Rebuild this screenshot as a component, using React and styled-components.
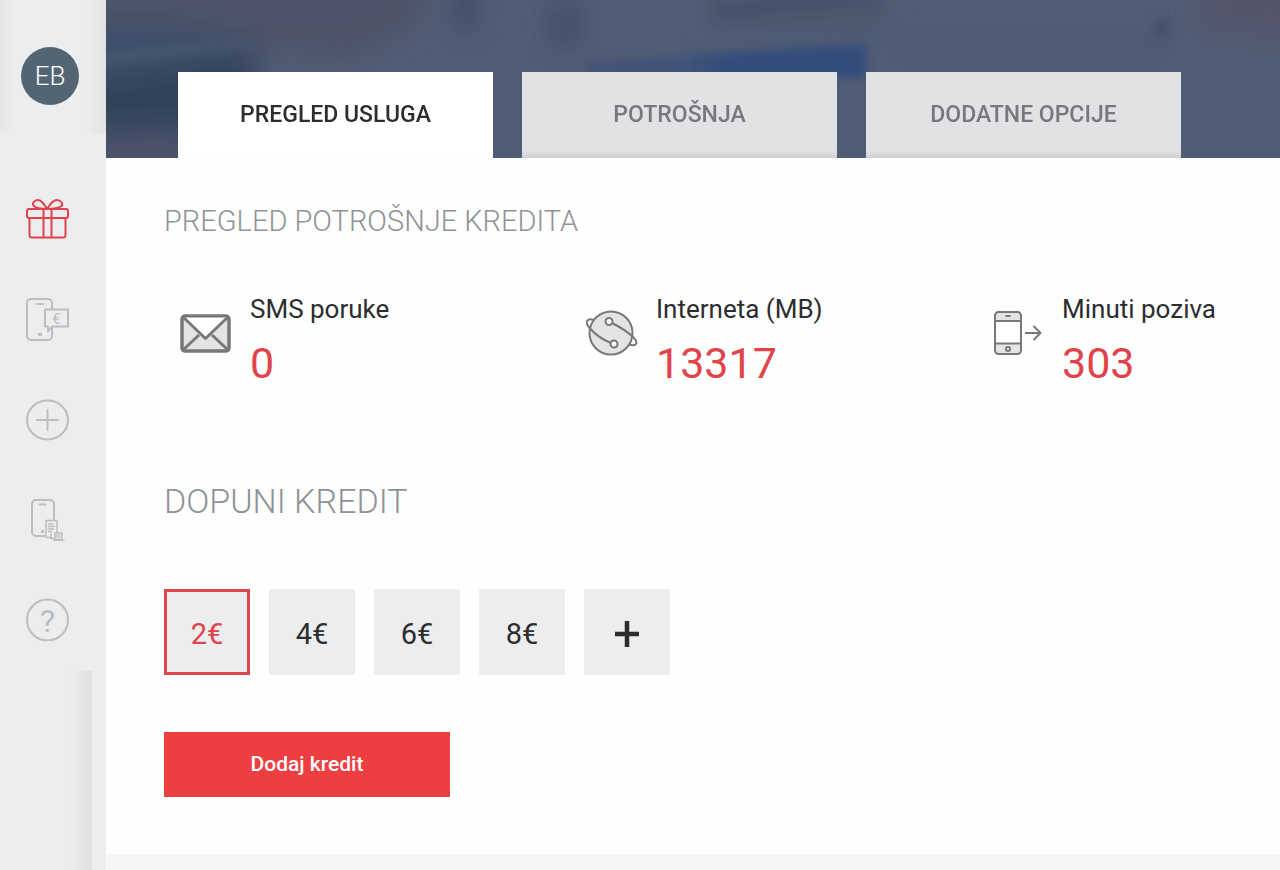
import React, { useState } from "react";
import styled, { createGlobalStyle } from "styled-components";

const tabs = ["PREGLED USLUGA", "POTROŠNJA", "DODATNE OPCIJE"];
const amounts = [2, 4, 6, 8];

const GiftIcon = () => (
    <SideSvg viewBox="0 0 44 44" aria-hidden="true">
        <rect x="2" y="12" width="41" height="9" rx="2" />
        <path d="M4.5 21v17.5a2 2 0 0 0 2 2h32a2 2 0 0 0 2-2V21M18.5 12v28.5M26.5 12v28.5" />
        <path d="M22 12C19 7 16.500 3 13 3 9 3 6.500 7 9 9c2 2 7 3 13 3zM22 12c3-5 6.500-9 10-9 4 0 6.500 4 4.500 6-2.500 2-8.500 3-14.500 3z" />
    </SideSvg>
);

const PhoneEuroIcon = () => (
    <SideSvg viewBox="0 0 44 44" aria-hidden="true">
        <path d="M27 12V6a4 4 0 0 0-4-4H6a4 4 0 0 0-4 4v33a4 4 0 0 0 4 4h17a4 4 0 0 0 4-4v-8" />
        <path d="M12 7h6" />
        <circle cx="15" cy="37.500" r="1" />
        <path d="M20 12.500h23v17H27l-4 5v-5h-3z" />
        <text x="31.500" y="26.500" fontSize="15">€</text>
    </SideSvg>
);

const AddIcon = () => (
    <SideSvg viewBox="0 0 44 44" aria-hidden="true">
        <ellipse cx="22.500" cy="23" rx="20.500" ry="19.500" />
        <path d="M22.500 13v20M12 23h21" />
    </SideSvg>
);

const PhoneBillIcon = () => (
    <SideSvg viewBox="0 0 44 44" aria-hidden="true">
        <path d="M29 22V7a4 4 0 0 0-4-4H11a4 4 0 0 0-4 4v28a4 4 0 0 0 4 4h9" />
        <path d="M14.500 7.500h6" />
        <circle cx="17.500" cy="34.500" r=".8" />
        <g strokeWidth="1.500">
            <path d="M26 40.500h-5v-17h11V35M23.500 27h4M23.500 29.500h6M23.500 32h5M23.500 34.500h3" />
            <path d="M30 36h7v6.500h-7zM29 43.500h10M26 37v4.500h3M32 38v2M34.500 38v2.500" />
        </g>
    </SideSvg>
);

const HelpIcon = () => (
    <SideSvg viewBox="0 0 44 44" aria-hidden="true">
        <circle cx="22.500" cy="23" r="20.500" />
        <text x="22.500" y="34.500" fontSize="32">?</text>
    </SideSvg>
);

const EnvelopeIcon = () => (
    <StatSvg viewBox="0 0 52 52" aria-hidden="true">
        <rect x="2" y="9" width="47" height="35" rx="3" fill="#e4e4e6" />
        <path d="M3 10l22.500 22L48 10z" fill="#fff" stroke="none" />
        <path d="M3 10l22.500 21.500L48 10M3.500 42.500L19 28M47.500 42.500L32 28" />
        <rect x="2" y="9" width="47" height="35" rx="3" />
    </StatSvg>
);

const GlobeIcon = () => (
    <StatSvg viewBox="0 0 52 52" aria-hidden="true" $thin>
        <circle cx="25" cy="26" r="21.500" fill="#e4e4e6" />
        <path d="M26 16c8 4 16 9 21.500 14.500 3 3 3.500 5 2.500 6.500-1 1.500-4 1.500-7.500 0M25 36C17 33 9 27 3.500 21 1 18 0 15 1.500 13.500c1.500-2 4-1.500 7-.5" />
        <circle cx="23" cy="14.500" r="3.500" fill="#fff" />
        <circle cx="28" cy="37" r="3.500" fill="#fff" />
    </StatSvg>
);

const CallIcon = () => (
    <StatSvg viewBox="0 0 52 52" aria-hidden="true" $thin>
        <rect x="3" y="5" width="26" height="42" rx="3.500" fill="#e4e4e6" />
        <rect x="3" y="14" width="26" height="22.500" fill="#fff" />
        <path d="M13.500 9h5M33 26h15.500M41.500 19l7 7-7 7" />
        <circle cx="16" cy="42" r="2" fill="#fff" />
    </StatSvg>
);

const menu = [
    { label: "Pokloni", icon: <GiftIcon /> },
    { label: "Bonovi", icon: <PhoneEuroIcon /> },
    { label: "Dodaj", icon: <AddIcon /> },
    { label: "Računi", icon: <PhoneBillIcon /> },
    { label: "Pomoć", icon: <HelpIcon /> },
];

const stats = [
    { label: "SMS poruke", value: 0, icon: <EnvelopeIcon /> },
    { label: "Interneta (MB)", value: 13317, icon: <GlobeIcon /> },
    { label: "Minuti poziva", value: 303, icon: <CallIcon /> },
];

// Out-of-focus photo behind the tabs
const BannerPhoto = () => (
    <Photo viewBox="0 0 1174 158" preserveAspectRatio="none" aria-hidden="true">
        <defs>
            <filter id="soft" x="-20%" y="-50%" width="140%" height="200%">
                <feGaussianBlur stdDeviation="14" />
            </filter>
            <filter id="edge" x="-20%" y="-50%" width="140%" height="200%">
                <feGaussianBlur stdDeviation="5" />
            </filter>
            <linearGradient id="blue">
                <stop offset="0" stopColor="#445277" />
                <stop offset=".35" stopColor="#40527a" />
                <stop offset=".5" stopColor="#304b7b" />
                <stop offset="1" stopColor="#304b7b" />
            </linearGradient>
        </defs>
        <rect width="1174" height="158" fill="#505d75" />
        <g filter="url(#soft)">
            <path d="M-30-30h350v50L250 60 140 50-30 20z" fill="#4e5268" />
            <path d="M-30 22l90 0 90 20v130H-30z" fill="#40506a" />
            <path d="M-30 80l180-25v70L-30 130z" fill="#33425a" />
            <path d="M-30 138h110v40H-30z" fill="#50536a" />
            <path d="M350-20h20v50h-20zM445 5h28v40h-28z" fill="#414c63" />
            <path d="M600-20h180v48H600z" fill="#4b566d" />
            <path d="M1090-20h120v65l-120-15z" fill="#53546a" />
            <path d="M790 38h270v20H790z" fill="#495870" />
        </g>
        <g filter="url(#edge)">
            <path d="M-20 55l170-17v8L-20 66z" fill="#465670" />
            <path d="M480 62l150-10 130-8v34H480z" fill="url(#blue)" opacity=".9" />
            <path d="M354 0h10v24h-10zM610 6l160-10v6l-155 16z" fill="#44516a" />
            <path d="M1048 20h16v16h-16z" fill="#454f67" />
        </g>
    </Photo>
);

const App = () => {
    const [activeTab, setActiveTab] = useState(0);
    const [activeMenu, setActiveMenu] = useState(0);
    const [amount, setAmount] = useState(2);

    return (
        <Page>
            <GlobalStyle />
            <Sidebar>
                <Profile>
                    <Avatar type="button">EB</Avatar>
                </Profile>
                <Menu>
                    {menu.map((item, i) => (
                        <MenuItem
                            key={item.label}
                            type="button"
                            aria-label={item.label}
                            $active={i === activeMenu}
                            onClick={() => setActiveMenu(i)}
                        >
                            {item.icon}
                        </MenuItem>
                    ))}
                </Menu>
                <SidebarTail />
            </Sidebar>

            <Main>
                <Banner>
                    <BannerPhoto />
                    <TabList role="tablist">
                        {tabs.map((tab, i) => (
                            <Tab
                                key={tab}
                                type="button"
                                role="tab"
                                aria-selected={i === activeTab}
                                $active={i === activeTab}
                                onClick={() => setActiveTab(i)}
                            >
                                {tab}
                            </Tab>
                        ))}
                    </TabList>
                </Banner>

                <Content>
                    <SectionTitle>PREGLED POTROŠNJE KREDITA</SectionTitle>
                    <Stats>
                        {stats.map((stat) => (
                            <Stat key={stat.label}>
                                {stat.icon}
                                <div>
                                    <StatLabel>{stat.label}</StatLabel>
                                    <StatValue>{stat.value}</StatValue>
                                </div>
                            </Stat>
                        ))}
                    </Stats>

                    <SectionTitle $large>DOPUNI KREDIT</SectionTitle>
                    <Amounts>
                        {amounts.map((value) => (
                            <Amount key={value}>
                                <input
                                    type="radio"
                                    name="amount"
                                    value={value}
                                    checked={value === amount}
                                    onChange={() => setAmount(value)}
                                />
                                {value}€
                            </Amount>
                        ))}
                        <MoreButton type="button" aria-label="Drugi iznos">
                            <svg width="26" height="26" viewBox="0 0 26 26" aria-hidden="true">
                                <path d="M13 0v26M1 13h24" stroke="#2d2d2f" strokeWidth="4.500" />
                            </svg>
                        </MoreButton>
                    </Amounts>
                    <SubmitButton type="button">Dodaj kredit</SubmitButton>
                </Content>
            </Main>
        </Page>
    );
};

export default App;

const GlobalStyle = createGlobalStyle`
    * {
        box-sizing: border-box;
    }
    body {
        margin: 0;
        background: #f6f6f8;
        font-family: Roboto, "Liberation Sans", sans-serif;
        color: #2d2d2f;
    }
    button {
        padding: 0;
        border: none;
        font-family: inherit;
        cursor: pointer;
    }
`;

const Page = styled.div`
    display: flex;
    min-height: 100vh;
`;

const Sidebar = styled.aside`
    display: flex;
    flex-direction: column;
    flex: 0 0 106px;
    background: #ecedef;
`;

const Profile = styled.div`
    display: flex;
    justify-content: center;
    height: 133px;
    padding: 47px 6px 0 0;
    background: linear-gradient(to right, #e6e7e9, #ecedee 14%, #ecedee 80%, #e1e2e3);
`;

const Avatar = styled.button`
    width: 58px;
    height: 58px;
    border-radius: 50%;
    background: #536573;
    color: #fff;
    font-size: 26px;
    font-weight: 300;
`;

const Menu = styled.nav`
    display: flex;
    flex-direction: column;
    padding: 36px 12px 2px 0;
`;

const MenuItem = styled.button`
    display: flex;
    align-items: center;
    justify-content: center;
    height: 100px;
    background: none;
    color: ${({ $active }) => ($active ? "#e2434b" : "#bcbdbf")};
`;

const SideSvg = styled.svg`
    width: 44px;
    height: 44px;
    fill: none;
    stroke: currentColor;
    stroke-width: 2;
    stroke-linejoin: round;
    stroke-linecap: round;
    text {
        fill: currentColor;
        stroke: none;
        text-anchor: middle;
    }
`;

const SidebarTail = styled.div`
    flex: 1;
    margin-right: 14px;
    background: linear-gradient(to right, #ecedef 76%, #dfe0e1);
`;

const Main = styled.main`
    flex: 1;
    min-width: 0;
`;

const Banner = styled.header`
    position: relative;
    padding: 72px 99px 0 72px;
    overflow: hidden;
`;

const Photo = styled.svg`
    position: absolute;
    inset: 0;
    width: 100%;
    height: 100%;
`;

const TabList = styled.div`
    position: relative;
    display: grid;
    grid-template-columns: repeat(3, 1fr);
    gap: 29px;
`;

const Tab = styled.button`
    height: 86px;
    padding-bottom: 2px;
    background: ${({ $active }) =>
        $active ? "#fff" : "linear-gradient(to top, #cecfd1, #e1e2e4 7px)"};
    color: ${({ $active }) => ($active ? "#2d2d2f" : "#77787b")};
    font-size: 23px;
    font-weight: 500;
`;

const Content = styled.div`
    padding: 45px 64px 57px 58px;
    background: #fdfefe;
`;

const SectionTitle = styled.h2`
    margin: 0;
    color: #919295;
    font-size: ${({ $large }) => ($large ? "34px" : "29px")};
    line-height: ${({ $large }) => ($large ? "44px" : "36px")};
    font-weight: 300;
`;

const Stats = styled.div`
    display: grid;
    grid-template-columns: 1fr 1fr auto;
    padding: 54px 0 92px 16px;
`;

const Stat = styled.div`
    display: flex;
    gap: 18px;
`;

const StatSvg = styled.svg`
    flex: none;
    width: 52px;
    height: 52px;
    margin-top: 14px;
    fill: none;
    stroke: #77787a;
    stroke-width: ${({ $thin }) => ($thin ? 2 : 3)};
    stroke-linejoin: round;
`;

const StatLabel = styled.div`
    font-size: 26px;
    line-height: 32px;
`;

const StatValue = styled.div`
    margin-top: 14px;
    color: #e2434b;
    font-size: 43px;
    line-height: 48px;
`;

const Amounts = styled.div`
    display: flex;
    gap: 19px;
    margin: 66px 0 57px;
`;

const Amount = styled.label`
    display: flex;
    align-items: center;
    justify-content: center;
    width: 86px;
    height: 86px;
    padding-top: 4px;
    border: 3px solid #ecedee;
    background: #ecedee;
    font-size: 29px;
    cursor: pointer;
    input {
        appearance: none;
        width: 0;
        height: 0;
        margin: 0;
    }
    &:has(input:checked) {
        border-color: #da474d;
        color: #e2434b;
    }
`;

const MoreButton = styled.button`
    display: flex;
    align-items: center;
    justify-content: center;
    width: 86px;
    height: 86px;
    padding-top: 4px;
    background: #ecedee;
`;

const SubmitButton = styled.button`
    display: block;
    width: 286px;
    height: 65px;
    padding-bottom: 2px;
    background: #ed3e42;
    color: #fff;
    font-size: 21px;
    font-weight: 500;
`;
